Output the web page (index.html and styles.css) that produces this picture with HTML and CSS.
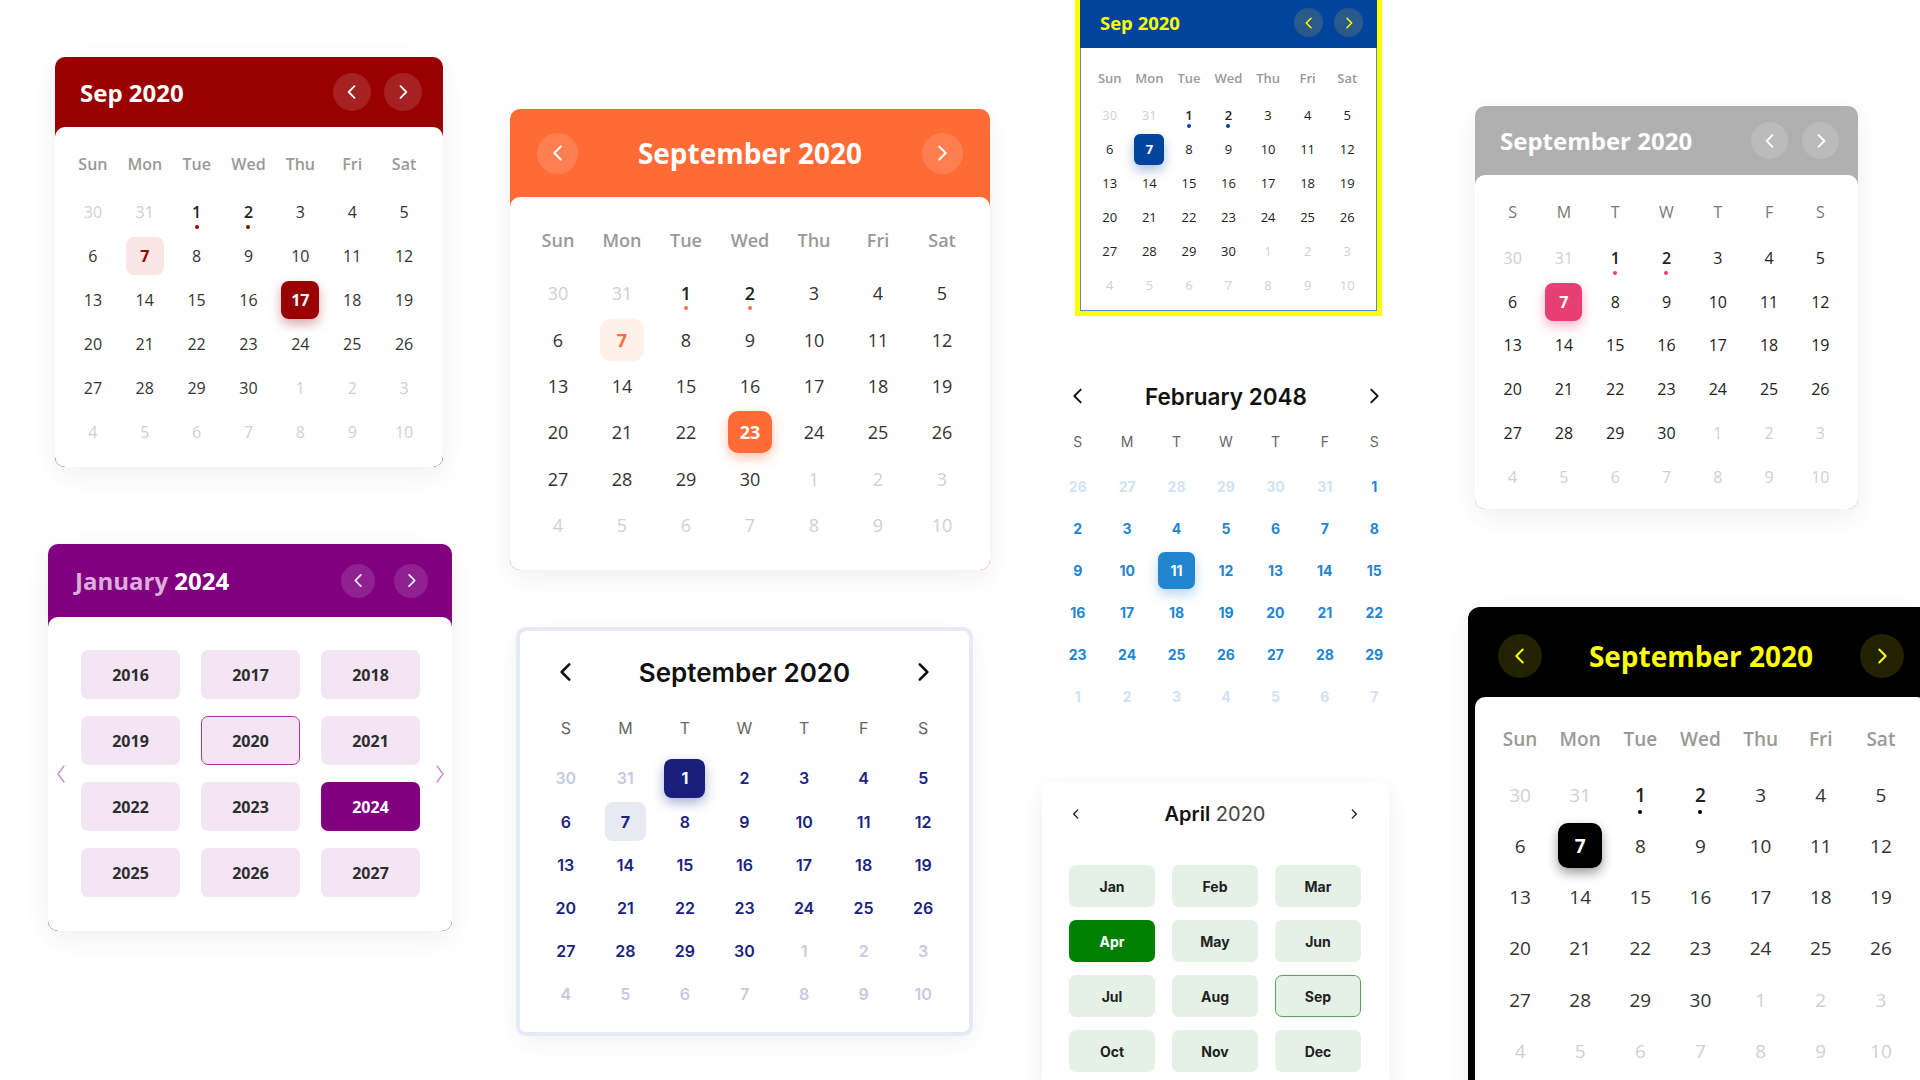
FILE: index.html
```html
<!DOCTYPE html>
<html lang="en">
<head>
<meta charset="utf-8">
<title>Calendars</title>
<link rel="stylesheet" href="styles.css">
</head>
<body>
<div class="board">

  <!-- Column A -->
  <div class="col col-a">
    <section class="card cal-red">
      <div class="hd">
        <div class="ttl">Sep 2020</div>
        <div class="nav">
          <span class="nb"><svg viewBox="0 0 24 24"><polyline points="15 5 8 12 15 19"/></svg></span>
          <span class="nb"><svg viewBox="0 0 24 24"><polyline points="9 5 16 12 9 19"/></svg></span>
        </div>
      </div>
      <div class="bd">
        <div class="wk"><span>Sun</span><span>Mon</span><span>Tue</span><span>Wed</span><span>Thu</span><span>Fri</span><span>Sat</span></div>
        <div class="days">
          <span class="d o">30</span><span class="d o">31</span><span class="d ev">1</span><span class="d ev">2</span><span class="d">3</span><span class="d">4</span><span class="d">5</span>
          <span class="d">6</span><span class="d today">7</span><span class="d">8</span><span class="d">9</span><span class="d">10</span><span class="d">11</span><span class="d">12</span>
          <span class="d">13</span><span class="d">14</span><span class="d">15</span><span class="d">16</span><span class="d sel">17</span><span class="d">18</span><span class="d">19</span>
          <span class="d">20</span><span class="d">21</span><span class="d">22</span><span class="d">23</span><span class="d">24</span><span class="d">25</span><span class="d">26</span>
          <span class="d">27</span><span class="d">28</span><span class="d">29</span><span class="d">30</span><span class="d o">1</span><span class="d o">2</span><span class="d o">3</span>
          <span class="d o">4</span><span class="d o">5</span><span class="d o">6</span><span class="d o">7</span><span class="d o">8</span><span class="d o">9</span><span class="d o">10</span>
        </div>
      </div>
    </section>

    <section class="card cal-purple">
      <div class="hd">
        <div class="ttl"><span class="mo">January</span> 2024</div>
        <div class="nav">
          <span class="nb"><svg viewBox="0 0 24 24"><polyline points="15 5 8 12 15 19"/></svg></span>
          <span class="nb"><svg viewBox="0 0 24 24"><polyline points="9 5 16 12 9 19"/></svg></span>
        </div>
      </div>
      <div class="bd">
        <span class="side side-l"><svg viewBox="0 0 10 20"><polyline points="8 2 2 10 8 18"/></svg></span>
        <div class="years">
          <span class="yr">2016</span><span class="yr">2017</span><span class="yr">2018</span>
          <span class="yr">2019</span><span class="yr cur">2020</span><span class="yr">2021</span>
          <span class="yr">2022</span><span class="yr">2023</span><span class="yr sel">2024</span>
          <span class="yr">2025</span><span class="yr">2026</span><span class="yr">2027</span>
        </div>
        <span class="side side-r"><svg viewBox="0 0 10 20"><polyline points="2 2 8 10 2 18"/></svg></span>
      </div>
    </section>
  </div>

  <!-- Column B -->
  <div class="col col-b">
    <section class="card cal-orange">
      <div class="hd">
        <span class="nb"><svg viewBox="0 0 24 24"><polyline points="15 5 8 12 15 19"/></svg></span>
        <div class="ttl">September 2020</div>
        <span class="nb"><svg viewBox="0 0 24 24"><polyline points="9 5 16 12 9 19"/></svg></span>
      </div>
      <div class="bd">
        <div class="wk"><span>Sun</span><span>Mon</span><span>Tue</span><span>Wed</span><span>Thu</span><span>Fri</span><span>Sat</span></div>
        <div class="days">
          <span class="d o">30</span><span class="d o">31</span><span class="d ev">1</span><span class="d ev">2</span><span class="d">3</span><span class="d">4</span><span class="d">5</span>
          <span class="d">6</span><span class="d today">7</span><span class="d">8</span><span class="d">9</span><span class="d">10</span><span class="d">11</span><span class="d">12</span>
          <span class="d">13</span><span class="d">14</span><span class="d">15</span><span class="d">16</span><span class="d">17</span><span class="d">18</span><span class="d">19</span>
          <span class="d">20</span><span class="d">21</span><span class="d">22</span><span class="d sel">23</span><span class="d">24</span><span class="d">25</span><span class="d">26</span>
          <span class="d">27</span><span class="d">28</span><span class="d">29</span><span class="d">30</span><span class="d o">1</span><span class="d o">2</span><span class="d o">3</span>
          <span class="d o">4</span><span class="d o">5</span><span class="d o">6</span><span class="d o">7</span><span class="d o">8</span><span class="d o">9</span><span class="d o">10</span>
        </div>
      </div>
    </section>

    <section class="card cal-navy">
      <div class="hd3">
        <span class="ch"><svg viewBox="0 0 24 24"><polyline points="15 5 8 12 15 19"/></svg></span>
        <div class="ttl">September 2020</div>
        <span class="ch"><svg viewBox="0 0 24 24"><polyline points="9 5 16 12 9 19"/></svg></span>
      </div>
      <div class="wk"><span>S</span><span>M</span><span>T</span><span>W</span><span>T</span><span>F</span><span>S</span></div>
      <div class="days">
        <span class="d o">30</span><span class="d o">31</span><span class="d sel">1</span><span class="d">2</span><span class="d">3</span><span class="d">4</span><span class="d">5</span>
        <span class="d">6</span><span class="d today">7</span><span class="d">8</span><span class="d">9</span><span class="d">10</span><span class="d">11</span><span class="d">12</span>
        <span class="d">13</span><span class="d">14</span><span class="d">15</span><span class="d">16</span><span class="d">17</span><span class="d">18</span><span class="d">19</span>
        <span class="d">20</span><span class="d">21</span><span class="d">22</span><span class="d">23</span><span class="d">24</span><span class="d">25</span><span class="d">26</span>
        <span class="d">27</span><span class="d">28</span><span class="d">29</span><span class="d">30</span><span class="d o">1</span><span class="d o">2</span><span class="d o">3</span>
        <span class="d o">4</span><span class="d o">5</span><span class="d o">6</span><span class="d o">7</span><span class="d o">8</span><span class="d o">9</span><span class="d o">10</span>
      </div>
    </section>
  </div>

  <!-- Column C -->
  <div class="col col-c">
    <section class="card cal-blue">
      <div class="inner">
        <div class="hd">
          <div class="ttl">Sep 2020</div>
          <div class="nav">
            <span class="nb"><svg viewBox="0 0 24 24"><polyline points="15 5 8 12 15 19"/></svg></span>
            <span class="nb"><svg viewBox="0 0 24 24"><polyline points="9 5 16 12 9 19"/></svg></span>
          </div>
        </div>
        <div class="bd">
          <div class="wk"><span>Sun</span><span>Mon</span><span>Tue</span><span>Wed</span><span>Thu</span><span>Fri</span><span>Sat</span></div>
          <div class="days">
            <span class="d o">30</span><span class="d o">31</span><span class="d ev">1</span><span class="d ev">2</span><span class="d">3</span><span class="d">4</span><span class="d">5</span>
            <span class="d">6</span><span class="d sel">7</span><span class="d">8</span><span class="d">9</span><span class="d">10</span><span class="d">11</span><span class="d">12</span>
            <span class="d">13</span><span class="d">14</span><span class="d">15</span><span class="d">16</span><span class="d">17</span><span class="d">18</span><span class="d">19</span>
            <span class="d">20</span><span class="d">21</span><span class="d">22</span><span class="d">23</span><span class="d">24</span><span class="d">25</span><span class="d">26</span>
            <span class="d">27</span><span class="d">28</span><span class="d">29</span><span class="d">30</span><span class="d o">1</span><span class="d o">2</span><span class="d o">3</span>
            <span class="d o">4</span><span class="d o">5</span><span class="d o">6</span><span class="d o">7</span><span class="d o">8</span><span class="d o">9</span><span class="d o">10</span>
          </div>
        </div>
      </div>
    </section>

    <section class="card cal-plain">
      <div class="hd3">
        <span class="ch"><svg viewBox="0 0 24 24"><polyline points="15 5 8 12 15 19"/></svg></span>
        <div class="ttl">February 2048</div>
        <span class="ch"><svg viewBox="0 0 24 24"><polyline points="9 5 16 12 9 19"/></svg></span>
      </div>
      <div class="wk"><span>S</span><span>M</span><span>T</span><span>W</span><span>T</span><span>F</span><span>S</span></div>
      <div class="days">
        <span class="d o">26</span><span class="d o">27</span><span class="d o">28</span><span class="d o">29</span><span class="d o">30</span><span class="d o">31</span><span class="d">1</span>
        <span class="d">2</span><span class="d">3</span><span class="d">4</span><span class="d">5</span><span class="d">6</span><span class="d">7</span><span class="d">8</span>
        <span class="d">9</span><span class="d">10</span><span class="d sel">11</span><span class="d">12</span><span class="d">13</span><span class="d">14</span><span class="d">15</span>
        <span class="d">16</span><span class="d">17</span><span class="d">18</span><span class="d">19</span><span class="d">20</span><span class="d">21</span><span class="d">22</span>
        <span class="d">23</span><span class="d">24</span><span class="d">25</span><span class="d">26</span><span class="d">27</span><span class="d">28</span><span class="d">29</span>
        <span class="d o">1</span><span class="d o">2</span><span class="d o">3</span><span class="d o">4</span><span class="d o">5</span><span class="d o">6</span><span class="d o">7</span>
      </div>
    </section>

    <section class="card cal-green">
      <div class="hd">
        <span class="ch"><svg viewBox="0 0 24 24"><polyline points="15 5 8 12 15 19"/></svg></span>
        <div class="ttl"><b>April</b> 2020</div>
        <span class="ch"><svg viewBox="0 0 24 24"><polyline points="9 5 16 12 9 19"/></svg></span>
      </div>
      <div class="months">
        <span class="mn">Jan</span><span class="mn">Feb</span><span class="mn">Mar</span>
        <span class="mn sel">Apr</span><span class="mn">May</span><span class="mn">Jun</span>
        <span class="mn">Jul</span><span class="mn">Aug</span><span class="mn cur">Sep</span>
        <span class="mn">Oct</span><span class="mn">Nov</span><span class="mn">Dec</span>
      </div>
    </section>
  </div>

  <!-- Column D -->
  <div class="col col-d">
    <section class="card cal-gray">
      <div class="hd">
        <div class="ttl">September 2020</div>
        <div class="nav">
          <span class="nb"><svg viewBox="0 0 24 24"><polyline points="15 5 8 12 15 19"/></svg></span>
          <span class="nb"><svg viewBox="0 0 24 24"><polyline points="9 5 16 12 9 19"/></svg></span>
        </div>
      </div>
      <div class="bd">
        <div class="wk"><span>S</span><span>M</span><span>T</span><span>W</span><span>T</span><span>F</span><span>S</span></div>
        <div class="days">
          <span class="d o">30</span><span class="d o">31</span><span class="d ev">1</span><span class="d ev">2</span><span class="d">3</span><span class="d">4</span><span class="d">5</span>
          <span class="d">6</span><span class="d sel">7</span><span class="d">8</span><span class="d">9</span><span class="d">10</span><span class="d">11</span><span class="d">12</span>
          <span class="d">13</span><span class="d">14</span><span class="d">15</span><span class="d">16</span><span class="d">17</span><span class="d">18</span><span class="d">19</span>
          <span class="d">20</span><span class="d">21</span><span class="d">22</span><span class="d">23</span><span class="d">24</span><span class="d">25</span><span class="d">26</span>
          <span class="d">27</span><span class="d">28</span><span class="d">29</span><span class="d">30</span><span class="d o">1</span><span class="d o">2</span><span class="d o">3</span>
          <span class="d o">4</span><span class="d o">5</span><span class="d o">6</span><span class="d o">7</span><span class="d o">8</span><span class="d o">9</span><span class="d o">10</span>
        </div>
      </div>
    </section>

    <section class="card cal-black">
      <div class="hd">
        <span class="nb"><svg viewBox="0 0 24 24"><polyline points="15 5 8 12 15 19"/></svg></span>
        <div class="ttl">September 2020</div>
        <span class="nb"><svg viewBox="0 0 24 24"><polyline points="9 5 16 12 9 19"/></svg></span>
      </div>
      <div class="bd">
        <div class="wk"><span>Sun</span><span>Mon</span><span>Tue</span><span>Wed</span><span>Thu</span><span>Fri</span><span>Sat</span></div>
        <div class="days">
          <span class="d o">30</span><span class="d o">31</span><span class="d ev">1</span><span class="d ev">2</span><span class="d">3</span><span class="d">4</span><span class="d">5</span>
          <span class="d">6</span><span class="d sel">7</span><span class="d">8</span><span class="d">9</span><span class="d">10</span><span class="d">11</span><span class="d">12</span>
          <span class="d">13</span><span class="d">14</span><span class="d">15</span><span class="d">16</span><span class="d">17</span><span class="d">18</span><span class="d">19</span>
          <span class="d">20</span><span class="d">21</span><span class="d">22</span><span class="d">23</span><span class="d">24</span><span class="d">25</span><span class="d">26</span>
          <span class="d">27</span><span class="d">28</span><span class="d">29</span><span class="d">30</span><span class="d o">1</span><span class="d o">2</span><span class="d o">3</span>
          <span class="d o">4</span><span class="d o">5</span><span class="d o">6</span><span class="d o">7</span><span class="d o">8</span><span class="d o">9</span><span class="d o">10</span>
        </div>
      </div>
    </section>
  </div>

</div>
</body>
</html>
```

FILE: styles.css
```css
* { box-sizing: border-box; }
html, body { margin: 0; padding: 0; }
body {
  width: 1920px;
  height: 1080px;
  overflow: hidden;
  background: #ffffff;
  font-family: "Open Sans", "Noto Sans", sans-serif;
  color: #333;
}

.board { display: flex; align-items: flex-start; height: 1080px; }
.col { display: flex; flex-direction: column; align-items: flex-start; flex-shrink: 0; }
.col-a { margin-left: 48px; width: 404px; }
.col-b { margin-left: 58px; width: 480px; }
.col-c { margin-left: 52px; width: 357px; }
.col-d { margin-left: 69px; width: 466px; }

.card { flex-shrink: 0; }

/* ---------- shared calendar parts ---------- */
.hd { display: flex; align-items: center; justify-content: space-between; }
.ttl { font-weight: 700; white-space: nowrap; }
.nav { display: flex; gap: var(--nav-gap); }
.nb {
  width: var(--nb); height: var(--nb); border-radius: 50%;
  display: flex; align-items: center; justify-content: center;
  background: var(--nb-bg);
}
.nb svg { width: var(--ic); height: var(--ic); fill: none; stroke: var(--nb-c); stroke-width: 2.2; stroke-linecap: round; stroke-linejoin: round; }

.wk {
  display: grid; grid-template-columns: repeat(7, 1fr);
  height: var(--wk-h); align-items: center; justify-items: center;
  font-size: var(--wk-fs); font-weight: var(--wk-fw); color: var(--wk-c);
}
.days {
  display: grid; grid-template-columns: repeat(7, 1fr);
  grid-auto-rows: var(--row-h); align-items: center; justify-items: center;
  font-size: var(--fs); color: var(--day-c);
}
.d {
  position: relative;
  width: var(--box-w); height: var(--box-h);
  display: flex; align-items: center; justify-content: center;
  border-radius: var(--box-r);
}
.d.o { color: var(--other); }
.d.ev { font-weight: 600; color: var(--ev-c, #222); }
.d.ev::after {
  content: ""; position: absolute; left: 50%; top: calc(50% + var(--dot-off));
  width: 4px; height: 4px; margin: -2px 0 0 -2px; border-radius: 50%;
  background: var(--accent);
}
.d.sel { background: var(--accent); color: #fff; font-weight: 700; box-shadow: 0 5px 12px var(--glow); }
.d.today { background: var(--today-bg); color: var(--today-c); font-weight: 700; }

/* ---------- red ---------- */
.cal-red {
  --accent: #990000; --glow: rgba(153, 0, 0, .35);
  --nb: 38px; --nav-gap: 13px; --nb-bg: rgba(255,255,255,.13); --nb-c: #fff; --ic: 20px;
  --wk-h: 44px; --wk-fs: 16px; --wk-fw: 600; --wk-c: #999;
  --row-h: 44px; --fs: 16px; --day-c: #333; --other: #d0d0d0;
  --box-w: 38px; --box-h: 38px; --box-r: 8px; --dot-off: 15px;
  --today-bg: #fbe6e6; --today-c: #990000;
  width: 388px; margin: 57px 0 0 7px;
  background: #990000; border-radius: 10px; overflow: hidden;
  box-shadow: 0 8px 28px rgba(40, 50, 80, .08);
}
.cal-red .hd { height: 70px; padding: 0 21px 0 25px; }
.cal-red .ttl { font-size: 24px; color: #fff; }
.cal-red .bd { background: #fff; border-radius: 10px; padding: 15px 13px 13px 12px; }
.cal-red .wk { margin-bottom: 4px; }

/* ---------- purple (years) ---------- */
.cal-purple {
  --nb: 34px; --nav-gap: 19px; --nb-bg: rgba(255,255,255,.13); --nb-c: #fff; --ic: 19px;
  width: 404px; margin-top: 77px;
  background: #800080; border-radius: 10px; overflow: hidden;
  box-shadow: 0 8px 28px rgba(40, 50, 80, .08);
}
.cal-purple .hd { height: 73px; padding: 0 24px 0 27px; }
.cal-purple .ttl { font-size: 24px; color: #fff; }
.cal-purple .ttl .mo { color: #dcaedc; }
.cal-purple .bd { background: #fff; border-radius: 10px; display: flex; align-items: center; padding: 33px 0 34px; }
.side { display: flex; justify-content: center; }
.side svg { width: 10px; height: 20px; fill: none; stroke: #c98ac9; stroke-width: 1.3; stroke-linecap: round; stroke-linejoin: round; }
.side-l { width: 26px; }
.side-r { width: 16px; margin-left: 12px; }
.years { display: grid; grid-template-columns: repeat(3, 99px); column-gap: 21px; row-gap: 17px; margin-left: 7px; }
.yr {
  height: 49px; border-radius: 7px; background: #f4e5f4;
  display: flex; align-items: center; justify-content: center;
  font-size: 16px; font-weight: 700; color: #2e2e2e;
}
.yr.cur { border: 1px solid #a43aa4; }
.yr.sel { background: #800080; color: #fff; }

/* ---------- orange ---------- */
.cal-orange {
  --accent: #ff6b35; --glow: rgba(255, 107, 53, .4);
  --nb: 41px; --nb-bg: rgba(255,255,255,.14); --nb-c: #fff; --ic: 22px;
  --wk-h: 46px; --wk-fs: 18px; --wk-fw: 600; --wk-c: #999;
  --row-h: 46.4px; --fs: 18px; --day-c: #333; --other: #d0d0d0;
  --box-w: 44px; --box-h: 42px; --box-r: 10px; --dot-off: 15px;
  --today-bg: #fff0ea; --today-c: #ff6b35;
  width: 480px; margin-top: 109px;
  background: #ff6b35; border-radius: 10px; overflow: hidden;
  box-shadow: 0 8px 28px rgba(40, 50, 80, .08);
}
.cal-orange .hd { height: 88px; padding: 0 27px; }
.cal-orange .ttl { font-size: 28px; color: #fff; }
.cal-orange .bd { background: #fff; border-radius: 10px; padding: 20px 16px 22px; }
.cal-orange .wk { margin-bottom: 7px; }

/* ---------- navy ---------- */
.cal-navy {
  --accent: #1a1f7c; --glow: rgba(26, 31, 124, .35);
  --wk-h: 44px; --wk-fs: 16px; --wk-fw: 400; --wk-c: #666;
  --row-h: 43.2px; --fs: 16px; --day-c: #1a237e; --other: #c7c9e2;
  --box-w: 41px; --box-h: 39px; --box-r: 8px;
  --today-bg: #e8e9f3; --today-c: #1a237e;
  width: 457px; margin: 57px 0 0 6px;
  background: #fff; border: 4px solid #e4eaf6; border-radius: 10px;
  padding: 19px 16px 16px;
  font-family: "Inter", "Liberation Sans", sans-serif;
  box-shadow: 0 8px 28px rgba(40, 50, 80, .06);
}
.hd3 { display: grid; grid-template-columns: var(--cw) 1fr var(--cw); align-items: center; justify-items: center; }
.ch { display: flex; align-items: center; justify-content: center; }
.ch svg { width: var(--ic); height: var(--ic); fill: none; stroke: var(--ch-c); stroke-width: var(--ch-sw); stroke-linecap: round; stroke-linejoin: round; }
.cal-navy .hd3 { --cw: 59.57px; --ic: 26px; --ch-c: #111; --ch-sw: 2.4; height: 44px; margin-bottom: 12px; }
.cal-navy .ttl { font-size: 26px; font-weight: 600; color: #111; }
.cal-navy .wk { margin-bottom: 6.4px; }
.cal-navy .days { font-weight: 600; }

/* ---------- blue / yellow ---------- */
.cal-blue {
  --accent: #00449e; --glow: rgba(0, 68, 158, .35);
  --nb: 29px; --nav-gap: 11px; --nb-bg: #2a5a8c; --nb-c: #ffff00; --ic: 16px;
  --wk-h: 34px; --wk-fs: 13px; --wk-fw: 600; --wk-c: #999;
  --row-h: 34px; --fs: 13px; --day-c: #222; --other: #d0d0d0;
  --box-w: 30px; --box-h: 31px; --box-r: 6px; --dot-off: 11px;
  width: 307px; margin: -8px 0 0 33px;
  border: 5px solid #ffff00;
}
.cal-blue .inner { background: #00449e; }
.cal-blue .hd { height: 51px; padding: 0 14px 0 20px; }
.cal-blue .ttl { font-size: 18.5px; color: #ffff00; }
.cal-blue .bd { background: #fff; border: 1px solid #6286c9; border-top: 0; padding: 13px 9px 8px; }
.cal-blue .wk { margin-bottom: 3px; }

/* ---------- plain (Feb 2048) ---------- */
.cal-plain {
  --accent: #2185d0; --glow: rgba(33, 133, 208, .35);
  --wk-h: 40px; --wk-fs: 14px; --wk-fw: 400; --wk-c: #666;
  --row-h: 42px; --fs: 14px; --day-c: #2185d0; --other: #cfe3f4;
  --box-w: 37px; --box-h: 37px; --box-r: 7px;
  width: 346px; margin: 60px 0 0 11px;
  font-family: "Inter", "Liberation Sans", sans-serif;
}
.cal-plain .hd3 { --cw: 49.4px; --ic: 22px; --ch-c: #111; --ch-sw: 2; height: 40px; margin-bottom: 5px; }
.cal-plain .ttl { font-size: 22.5px; font-weight: 600; color: #111; }
.cal-plain .wk { margin-bottom: 4px; }
.cal-plain .days { font-weight: 700; }

/* ---------- green (months) ---------- */
.cal-green {
  width: 347px; margin-top: 66px;
  background: #fff; border-radius: 8px;
  padding: 11px 28px 24px 27px;
  font-family: "Inter", "Liberation Sans", sans-serif;
  box-shadow: 0 6px 26px rgba(40, 50, 80, .08);
}
.cal-green .hd { height: 40px; margin-bottom: 31px; --ic: 20px; --ch-c: #111; --ch-sw: 2.2; }
.cal-green .ch { width: 14px; }
.cal-green .ttl { font-size: 20px; font-weight: 400; color: #444; }
.cal-green .ttl b { font-weight: 600; color: #111; }
.months { display: grid; grid-template-columns: repeat(3, 86px); column-gap: 17px; row-gap: 13px; }
.mn {
  height: 42px; border-radius: 7px; background: #e5f1e5;
  display: flex; align-items: center; justify-content: center;
  font-size: 14px; font-weight: 700; color: #222;
}
.mn.sel { background: #008000; color: #fff; }
.mn.cur { border: 1.5px solid #55a955; }

/* ---------- gray ---------- */
.cal-gray {
  --accent: #e83e76; --glow: rgba(232, 62, 118, .4);
  --nb: 37px; --nav-gap: 14px; --nb-bg: rgba(255,255,255,.14); --nb-c: #fff; --ic: 20px;
  --wk-h: 44px; --wk-fs: 16px; --wk-fw: 400; --wk-c: #777;
  --row-h: 43.8px; --fs: 16px; --day-c: #222; --other: #d0d0d0;
  --box-w: 37px; --box-h: 38px; --box-r: 8px; --dot-off: 15px;
  width: 383px; margin: 106px 0 0 7px;
  background: #b0b0b0; border-radius: 10px; overflow: hidden;
  box-shadow: 0 8px 28px rgba(40, 50, 80, .08);
}
.cal-gray .hd { height: 69px; padding: 0 19px 0 25px; }
.cal-gray .ttl { font-size: 24px; color: #fff; }
.cal-gray .bd { background: #fff; border-radius: 10px; padding: 15px 12px 10px; }
.cal-gray .wk { margin-bottom: 2px; }

/* ---------- black / yellow ---------- */
.cal-black {
  --accent: #000; --glow: rgba(0, 0, 0, .4);
  --nb: 44px; --nb-bg: #222200; --nb-c: #ffff00; --ic: 22px;
  --wk-h: 46px; --wk-fs: 19px; --wk-fw: 600; --wk-c: #999;
  --row-h: 51.2px; --fs: 19px; --day-c: #333; --other: #d0d0d0;
  --box-w: 44px; --box-h: 45px; --box-r: 10px; --dot-off: 17px;
  width: 466px; margin-top: 98px;
  background: #000; border-radius: 12px; overflow: hidden;
  box-shadow: 0 8px 28px rgba(40, 50, 80, .08);
}
.cal-black .hd { height: 90px; padding: 8px 30px 0; }
.cal-black .ttl { font-size: 28px; color: #ffff00; }
.cal-black .bd { background: #fff; border-radius: 10px; margin: 0 7px; padding: 19px 16px 20px 15px; }
.cal-black .wk { margin-bottom: 7.4px; }
```
